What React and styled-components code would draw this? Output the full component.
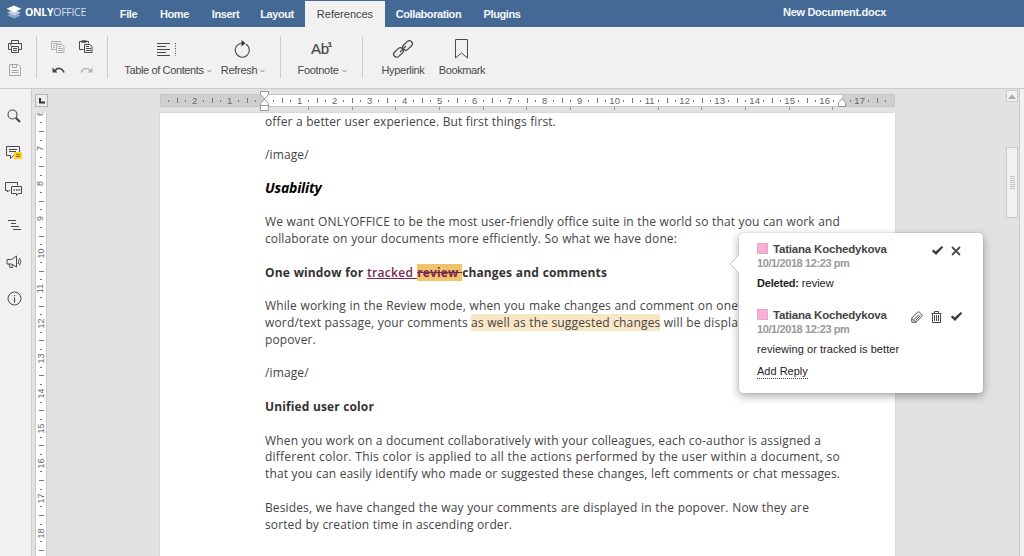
import React from "react";
import styled, { createGlobalStyle } from "styled-components";

const Global = createGlobalStyle`
  * { box-sizing: border-box; }
  html, body { margin: 0; height: 100%; overflow: hidden; }
  body { font-family: "Liberation Sans", Arial, sans-serif; font-size: 11px; color: #4a4a4a; background: #e2e2e2; }
`;

const Shell = styled.div`
  width: 1024px;
  height: 556px;
  display: flex;
  flex-direction: column;
  overflow: hidden;
`;

/* ---------- header ---------- */
const Header = styled.header`
  height: 27px;
  flex: none;
  display: flex;
  background: #446995;
  color: #f4f7fb;
`;
const Brand = styled.div`
  width: 110px;
  padding: 0 0 3px 6px;
  display: flex;
  align-items: center;
  gap: 3px;
`;
const BrandName = styled.span`
  font: 700 10.5px "Open Sans", sans-serif;
  letter-spacing: -0.28px;
  color: #fff;
  white-space: nowrap;
`;
const BrandLight = styled.span`
  font-weight: 400;
  color: #d5deea;
`;
const Tab = styled.div`
  width: ${(p) => p.$w}px;
  margin-top: 1px;
  display: flex;
  align-items: center;
  justify-content: center;
  font-weight: ${(p) => (p.$active ? 400 : 700)};
  letter-spacing: ${(p) => (p.$active ? 0 : -0.42)}px;
  background: ${(p) => (p.$active ? "#f1f1f1" : "transparent")};
  color: ${(p) => (p.$active ? "#444" : "#f4f7fb")};
`;
const DocTitle = styled.div`
  margin-left: 251px;
  line-height: 24px;
  font-weight: 700;
  letter-spacing: -0.3px;
`;

/* ---------- toolbar ---------- */
const Toolbar = styled.div`
  height: 62px;
  flex: none;
  display: flex;
  background: #f1f1f1;
  border-bottom: 1px solid #cbcbcb;
`;
const SmallGrid = styled.div`
  display: grid;
  grid-template-columns: repeat(${(p) => p.$cols}, 28px);
  grid-template-rows: 24px 24px;
  padding: 7px 0 0 ${(p) => p.$left}px;
  width: ${(p) => p.$w}px;
  place-items: center;
`;
const Divider = styled.div`
  width: 1px;
  height: 42px;
  margin: 9px 0 0 ${(p) => p.$ml || 0}px;
  background: #cbcbcb;
`;
const BigButton = styled.div`
  width: ${(p) => p.$w}px;
  margin-left: ${(p) => p.$ml || 0}px;
  display: flex;
  flex-direction: column;
  align-items: center;
`;
const BigIcon = styled.div`
  height: 35px;
  padding-top: 8px;
  padding-right: ${(p) => p.$pr || 0}px;
  display: flex;
  align-items: center;
`;
const Label = styled.div`
  display: flex;
  align-items: center;
  gap: 3px;
  line-height: 17px;
  letter-spacing: ${(p) => p.$ls ?? -0.2}px;
  white-space: nowrap;
`;
const FootGlyph = styled.div`
  font-size: 15px;
  line-height: 18px;
  letter-spacing: -0.3px;
  -webkit-text-stroke: 0.2px #444;
`;
const FootSup = styled.sup`
  font-size: 8px;
  font-weight: 700;
  vertical-align: 7px;
  line-height: 0;
  margin-left: -1px;
`;

/* ---------- work area ---------- */
const Work = styled.div`
  flex: 1;
  min-height: 0;
  display: flex;
`;
const Side = styled.nav`
  width: 32px;
  background: #f1f1f1;
  border-right: 1px solid #cbcbcb;
  padding: 9px 3px 0 0;
  display: flex;
  flex-direction: column;
  align-items: center;
`;
const SideItem = styled.div`
  height: 36.4px;
  display: flex;
  align-items: center;
`;
const VRulerCol = styled.div`
  width: 128px;
  padding: 5px 0 0 3px;
`;
const TabStop = styled.div`
  width: 13px;
  height: 13px;
  border: 1px solid #b4b4b4;
  background: #ececec;
  display: flex;
  align-items: center;
  justify-content: center;
`;
const VTrack = styled.div`
  width: 12px;
  height: 443px;
  margin-top: 6px;
  overflow: hidden;
  background: #fff;
  border: solid #cbcbcb;
  border-width: 0 1px;
`;
const VStrip = styled.div`
  margin-top: -3.5px;
  display: flex;
  flex-direction: column;
`;
const VTick = styled.div`
  height: 8.74px;
  flex: none;
  display: flex;
  align-items: center;
  justify-content: center;
`;
const VLabel = styled.span`
  font-size: 9px;
  line-height: 9px;
  color: #666;
  transform: rotate(-90deg);
`;
const VMark = styled.i`
  width: ${(p) => (p.$long ? 5 : 2)}px;
  height: 1px;
  background: #777;
`;

const Center = styled.main`
  width: 735px;
  display: flex;
  flex-direction: column;
`;
const HRuler = styled.div`
  position: relative;
  height: 24px;
  flex: none;
  padding-top: 5px;
`;
const HTrack = styled.div`
  height: 13px;
  display: flex;
  align-items: center;
  padding-left: 3px;
  border: 1px solid #c4c4c4;
  background: linear-gradient(90deg, #cfcfcf 104px, #fff 104px, #fff 681px, #cfcfcf 681px);
`;
const HTick = styled.div`
  width: 8.75px;
  flex: none;
  display: flex;
  justify-content: center;
  align-items: center;
`;
const HLabel = styled.span`
  font-size: 9.5px;
  line-height: 11px;
  color: #666;
`;
const HMark = styled.i`
  width: 1px;
  height: ${(p) => (p.$long ? 5 : 2)}px;
  background: #777;
`;
const Stops = styled.div`
  display: flex;
  padding-left: 148px;
  gap: 42.7px;
`;
const Stop = styled.i`
  width: 1px;
  height: 3px;
  flex: none;
  background: #999;
`;
const Marker = styled.svg`
  position: absolute;
  left: ${(p) => p.$x}px;
  top: ${(p) => p.$y}px;
`;

const Paper = styled.article`
  flex: 1;
  background: #fff;
  padding: 0.5px 0 0 105px;
  box-shadow: 0 0 1px #aaa;
  font-family: "Open Sans", "Noto Sans", sans-serif;
`;
const Line = styled.p`
  margin: 0;
  height: 16.8px;
  line-height: 16.8px;
  width: ${(p) => (p.$w ? p.$w + "px" : "auto")};
  text-align-last: ${(p) => (p.$w ? "justify" : "left")};
  white-space: nowrap;
  font-size: 12px;
  font-weight: ${(p) => (p.$bold ? 700 : 400)};
  letter-spacing: ${(p) => p.$ls ?? 0.12}px;
  color: ${(p) => (p.$bold ? "#333" : "#444")};
`;
const Heading = styled(Line)`
  line-height: 14.8px;
  font-size: 14px;
  font-style: italic;
  color: #000;
`;
const Inserted = styled.span`
  color: #7a2750;
  font-weight: 600;
  letter-spacing: 0.3px;
  text-decoration: underline;
`;
const Deleted = styled.span`
  color: #7a2750;
  background: #f0c36c;
  text-decoration: line-through;
`;
const Marked = styled.span`
  background: #f9e6c4;
`;

const Gutter = styled.div`
  flex: 1;
`;
const Scroll = styled.div`
  width: 13px;
  padding: 1px 1px 0 0;
`;
const ScrollUp = styled.div`
  height: 12px;
  border: 1px solid #cbcbcb;
  background: #f1f1f1;
  display: flex;
  align-items: center;
  justify-content: center;
`;
const Thumb = styled.div`
  height: 71px;
  margin-top: 45px;
  border: 1px solid #cbcbcb;
  background: #f1f1f1;
  display: flex;
  flex-direction: column;
  align-items: center;
  justify-content: center;
  gap: 1px;
`;
const Grip = styled.i`
  width: 5px;
  height: 1px;
  background: #c4c4c4;
`;
const RightPanel = styled.div`
  width: 5px;
  background: #f1f1f1;
  border-left: 1px solid #cbcbcb;
`;

/* ---------- comment popover ---------- */
const Popover = styled.aside`
  position: absolute;
  left: 739px;
  top: 233px;
  width: 244px;
  height: 160px;
  padding: 8px 20px 0 18px;
  background: #fff;
  border-radius: 4px;
  box-shadow: 0 3px 10px rgba(0, 0, 0, 0.35), 0 0 1px rgba(0, 0, 0, 0.4);
  color: #222;
`;
const Tail = styled.svg`
  position: absolute;
  left: -10px;
  top: 20px;
`;
const Entry = styled.section`
  height: 66px;
`;
const Row = styled.div`
  display: flex;
  align-items: center;
  height: 15px;
`;
const Swatch = styled.i`
  width: 11px;
  height: 11px;
  margin-right: 5px;
  background: #f9aed2;
  border: 1px solid #dfabc6;
`;
const Author = styled.span`
  flex: 1;
  font-weight: 700;
  font-size: 11.5px;
  letter-spacing: -0.19px;
  color: #444;
`;
const Actions = styled.div`
  display: flex;
  align-items: center;
  gap: ${(p) => p.$gap}px;
  padding: 4px ${(p) => p.$pr}px 0 0;
`;
const When = styled.div`
  line-height: 14px;
  letter-spacing: -0.4px;
  font-weight: 700;
  color: #999;
`;
const Body = styled.div`
  margin-top: 6px;
  line-height: 15px;
  letter-spacing: ${(p) => p.$ls ?? 0}px;
  white-space: nowrap;
`;
const Strong = styled.b`
  letter-spacing: -0.2px;
`;
const Reply = styled.span`
  display: inline-block;
  margin-top: 7px;
  line-height: 14px;
  border-bottom: 1px dotted #444;
`;

const Ico = ({ w, h = w, c = "#4a4a4a", s = 1, children, ...r }) => (
  <svg width={w} height={h} viewBox={`0 0 ${w} ${h}`} fill="none" stroke={c} strokeWidth={s} {...r}>
    {children}
  </svg>
);
const Caret = () => (
  <Ico w={5} h={4} c="#888"><path d="M.5 1l2 2 2-2" /></Ico>
);
const Check = () => (
  <Ico w={13} h={11}>
    <path d="M.8 6l1.800-1.500 2 2L10.800 1l1.500 1.200L5 10z" fill="#3c3c3c" stroke="none" />
  </Ico>
);
const CopyIcon = ({ c, dark }) => (
  <Ico w={14} h={13} c={c}>
    <path d="M4.5 9.500h-4v-8h9v2" />
    {dark ? <path d="M2.500 1.500h5" strokeWidth="2.500" /> : <path d="M2 3.500h5M2 5.500h2M2 7.500h2" />}
    <path d="M5.500 4.500h5l2.500 2v6h-7.500z" fill="#f1f1f1" />
    <path d="M7 6.500h3M7 8.500h5M7 10.500h5" />
  </Ico>
);

const hTicks = Array.from({ length: 83 }, (_, i) => i - 11);
const vTicks = Array.from({ length: 52 }, (_, i) => i);

const tabs = [["File", 37], ["Home", 55], ["Insert", 47], ["Layout", 56], ["References", 80], ["Collaboration", 87], ["Plugins", 60]];

export default function App() {
  return (
    <Shell>
      <Global />
      <Header>
        <Brand>
          <svg width="16" height="14" viewBox="0 0 16 14">
            <path d="M8 7.500L1 10.300l7 3.200 7-3.200z" fill="#8fa8c6" />
            <path d="M8 4.800L1 7.400l7 3.200 7-3.200z" fill="#c5d2e2" />
            <path d="M8 .5L.5 3.700 8 7.200l7.500-3.500z" fill="#fff" />
          </svg>
          <BrandName>ONLY<BrandLight>OFFICE</BrandLight></BrandName>
        </Brand>
        {tabs.map(([t, w]) => (
          <Tab key={t} $w={w} $active={t === "References"}>{t}</Tab>
        ))}
        <DocTitle>New Document.docx</DocTitle>
      </Header>

      <Toolbar>
        <SmallGrid $cols={1} $left={1} $w={36}>
          <Ico w={14} h={13}>
            <path d="M3.500 3.500v-3h7v3M3 9.500H.5v-6h13v6H11M3.500 6.500h7v6h-7zM5 8.500h4M5 10.500h4M2 5h1.500" />
          </Ico>
          <Ico w={12} h={12} c="#a8a8a8">
            <path d="M.5.5h8.500l2.500 2.500v8.500h-11zM3.500.5v3h4v-3M2.500 6.500h7M2.500 8.500h7" />
          </Ico>
        </SmallGrid>
        <Divider />
        <SmallGrid $cols={2} $left={7} $w={70}>
          <CopyIcon c="#b0b0b0" />
          <CopyIcon c="#4a4a4a" dark />
          <Ico w={13} h={8}>
            <path d="M3 4.500C5.500 1.500 10 1.500 12 6.500" strokeWidth="1.700" />
            <path d="M.5 1.500v5h5z" fill="#444" stroke="none" />
          </Ico>
          <Ico w={13} h={8} c="#b4b4b4">
            <path d="M10 4.500C7.500 1.500 3 1.500 1 6.500" strokeWidth="1.300" />
            <path d="M12.500 1.500v5h-5z" fill="#b4b4b4" stroke="none" />
          </Ico>
        </SmallGrid>
        <Divider />
        <BigButton $w={88} $ml={16}>
          <BigIcon $pr={2}>
            <Ico w={20} h={14}>
              <path d="M0 1.500h13M0 4.500h9M0 7.500h13M0 10.500h9M0 13.500h13" />
              <path d="M18.500 1v13" strokeDasharray="1 1.500" />
            </Ico>
          </BigIcon>
          <Label $ls={-0.37}>Table of Contents <Caret /></Label>
        </BigButton>
        <BigButton $w={44} $ml={9}>
          <BigIcon $pr={2}>
            <Ico w={16} h={18} s={1.1}>
              <path d="M12 4.300A7 7 0 1 1 7.500 3.300" />
              <path d="M7.500 0v6.500L11.500 3.300z" fill="#333" stroke="none" />
            </Ico>
          </BigIcon>
          <Label $ls={-0.3}>Refresh <Caret /></Label>
        </BigButton>
        <Divider $ml={15} />
        <BigButton $w={50} $ml={16}>
          <BigIcon $pr={1}><FootGlyph>Ab<FootSup>1</FootSup></FootGlyph></BigIcon>
          <Label $ls={-0.3}>Footnote <Caret /></Label>
        </BigButton>
        <Divider $ml={15} />
        <BigButton $w={44} $ml={18}>
          <BigIcon>
            <Ico w={22} h={22} s={1.3}>
              <rect x="10" y="4.500" width="11" height="6" rx="3" transform="rotate(-43 15.500 7.500)" />
              <rect x="1" y="11.500" width="11" height="6" rx="3" transform="rotate(-43 6.500 14.500)" />
              <path d="M8 14l6-6" />
            </Ico>
          </BigIcon>
          <Label $ls={-0.3}>Hyperlink</Label>
        </BigButton>
        <BigButton $w={48} $ml={13}>
          <BigIcon $pr={1}>
            <Ico w={13} h={20}><path d="M.5.5h12v18.500l-6-5-6 5z" /></Ico>
          </BigIcon>
          <Label $ls={-0.38}>Bookmark</Label>
        </BigButton>
      </Toolbar>

      <Work>
        <Side>
          <SideItem>
            <Ico w={14} h={14} s={1.1}><circle cx="5.500" cy="5.500" r="4.500" /><path d="M8.800 8.800l4.200 4.200" strokeWidth="2.200" /></Ico>
          </SideItem>
          <SideItem>
            <Ico w={16} h={14}>
              <path d="M.5 .5h13v9h-6l-3 3v-3h-4zM3 3.500h8M3 5.500h7" />
              <rect x="8" y="6" width="8" height="7" rx="1" fill="#ffd020" stroke="none" />
              <path d="M10 8.500h4M10 10.500h4" stroke="#8a6d00" />
            </Ico>
          </SideItem>
          <SideItem>
            <Ico w={18} h={15}>
              <path d="M5 9.500H4L2.500 11V9.500h-2v-8h12v3" />
              <path d="M6.500 5.500h10v7h-3l-2 2v-2h-5z" />
              <path d="M8.500 9h1.500M11 9h1.500M13.500 9H15" strokeWidth="1.500" />
            </Ico>
          </SideItem>
          <SideItem>
            <Ico w={14} h={12}><path d="M1 1.500h8M4 4.500h5M4 7.500h8M6 10.500h8" /></Ico>
          </SideItem>
          <SideItem>
            <Ico w={16} h={14}>
              <path d="M1 4.500h4.500L10.500 1v11L5.500 9H1zM3 9l1 3.500h2.500L6 9.500M12 4.500q1.500 2 0 4.500M13.500 3q2.500 3.500 0 7.500" />
            </Ico>
          </SideItem>
          <SideItem>
            <Ico w={15} h={15}><circle cx="7.500" cy="7.500" r="6.500" /><path d="M7.500 6.500v5M7.500 4v1.200" strokeWidth="1.200" /></Ico>
          </SideItem>
        </Side>

        <VRulerCol>
          <TabStop><Ico w={7} h={7} s={2} c="#333"><path d="M2 1v4.500h5" /></Ico></TabStop>
          <VTrack>
            <VStrip>
              {vTicks.map((q) => (
                <VTick key={q}>{q % 4 === 0 ? <VLabel>{6 + q / 4}</VLabel> : <VMark $long={q % 4 === 2} />}</VTick>
              ))}
            </VStrip>
          </VTrack>
        </VRulerCol>

        <Center>
          <HRuler>
            <HTrack>
              {hTicks.map((q) => (
                <HTick key={q}>
                  {q === 0 || q === 66 ? null : q % 4 === 0 ? <HLabel>{Math.abs(q / 4)}</HLabel> : <HMark $long={q % 2 === 0} />}
                </HTick>
              ))}
            </HTrack>
            <Stops>{Array.from({ length: 13 }, (_, i) => <Stop key={i} />)}</Stops>
            <Marker $x={100} $y={2} width="10" height="21" viewBox="0 0 10 21" fill="#fff" stroke="#999">
              <path d="M.5.5h8v3l-4 4.500-4-4.500zM4.500 8l4 4.500v2h-8v-2zM.5 14.500h8v5h-8z" />
            </Marker>
            <Marker $x={678} $y={9} width="9" height="9" viewBox="0 0 9 9" fill="#fff" stroke="#999">
              <path d="M4 .5l3.500 4v4h-7v-4z" />
            </Marker>
          </HRuler>
          <Paper>
            <Line $w={291}>offer a better user experience. But first things first.</Line>
            <Line />
            <Line>/image/</Line>
            <Line />
            <Heading $bold $ls={-0.2}>Usability</Heading>
            <Line />
            <Line $w={575}>We want ONLYOFFICE to be the most user-friendly office suite in the world so that you can work and</Line>
            <Line $w={412}>collaborate on your documents more efficiently. So what we have done:</Line>
            <Line />
            <Line $bold $w={342}>One window for <Inserted>tracked </Inserted><Deleted>review </Deleted>changes and comments</Line>
            <Line />
            <Line $w={473}>While working in the Review mode, when you make changes and comment on one</Line>
            <Line $w={473} $ls={0.17}>word/text passage, your comments <Marked>as well as the suggested changes</Marked> will be displa</Line>
            <Line>popover.</Line>
            <Line />
            <Line>/image/</Line>
            <Line />
            <Line $bold $w={109}>Unified user color</Line>
            <Line />
            <Line $w={556} $ls={0.15}>When you work on a document collaboratively with your colleagues, each co-author is assigned a</Line>
            <Line $w={575} $ls={0.22}>different color. This color is applied to all the actions performed by the user within a document, so</Line>
            <Line $w={575}>that you can easily identify who made or suggested these changes, left comments or chat messages.</Line>
            <Line />
            <Line $w={544}>Besides, we have changed the way your comments are displayed in the popover. Now they are</Line>
            <Line $w={247}>sorted by creation time in ascending order.</Line>
          </Paper>
        </Center>
        <Gutter />
        <Scroll>
          <ScrollUp><svg width="8" height="5"><path d="M0 5l4-4.500L8 5z" fill="#aaa" /></svg></ScrollUp>
          <Thumb>{[0, 1, 2, 3, 4, 5, 6].map((i) => <Grip key={i} />)}</Thumb>
        </Scroll>
        <RightPanel />
      </Work>

      <Popover>
        <Tail width="11" height="22" viewBox="0 0 11 22">
          <path d="M11 1L1 11l10 10z" fill="#fff" />
          <path d="M10 2L1 11l9 9" fill="none" stroke="#c8c8c8" />
        </Tail>
        <Entry>
          <Row>
            <Swatch /><Author>Tatiana Kochedykova</Author>
            <Actions $gap={7} $pr={2}>
              <Check />
              <Ico w={10} h={10} s={1.8}><path d="M1 1l8 8M9 1L1 9" /></Ico>
            </Actions>
          </Row>
          <When>10/1/2018 12:23 pm</When>
          <Body><Strong>Deleted:</Strong> review</Body>
        </Entry>
        <Entry>
          <Row>
            <Swatch /><Author>Tatiana Kochedykova</Author>
            <Actions $gap={8} $pr={0}>
              <Ico w={12} h={12}>
                <path d="M.8 11.200V7L6.500 1.200q1-.8 2 0l2.300 2.300q.8 1 0 2L5 11.200zM3 8.500l5-5M4.500 9.500l5-5M1 7.500l3.500 3.500" />
              </Ico>
              <Ico w={11} h={12}>
                <path d="M.5 2.500h10M3.500 2V.5h4V2M1.500 3v8.500h8V3M3.500 4v6M5.500 4v6M7.500 4v6" />
              </Ico>
              <Check />
            </Actions>
          </Row>
          <When>10/1/2018 12:23 pm</When>
          <Body $ls={0.05}>reviewing or tracked is better</Body>
          <Reply>Add Reply</Reply>
        </Entry>
      </Popover>
    </Shell>
  );
}
